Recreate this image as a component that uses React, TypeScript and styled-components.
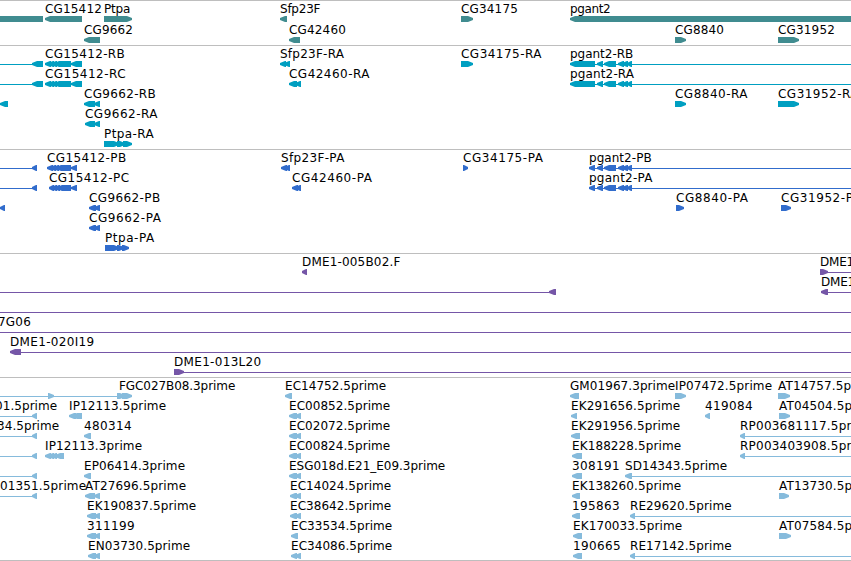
import React from 'react';
import styled, { createGlobalStyle } from 'styled-components';

const GlobalStyle = createGlobalStyle`
  body {
    margin: 0;
    background: #fff;
  }
`;

const Viewer = styled.div`
  display: flex;
  flex-flow: column;
  width: 851px;
  height: 561px;
  overflow: hidden;
  box-sizing: border-box;
  border-bottom: 1px solid #bebebe;
  color: #000;
  font: 12px/14px "DejaVu Sans", sans-serif;
`;

const TrackContainer = styled.div<{ $color: string }>`
  flex: none;
  border-top: 1px solid #bebebe;
  padding-bottom: 3px;
  color: ${props => props.$color};

  &:first-child {
    padding-bottom: 2px;
  }
`;

const RowContainer = styled.div<{ $height: number }>`
  position: relative;
  height: ${props => props.$height}px;
`;

const Label = styled.span<{ $x: number, $spacing: number }>`
  position: absolute;
  top: 1px;
  left: ${props => props.$x}px;
  color: #000;
  white-space: pre;
  letter-spacing: ${props => props.$spacing}px;
`;

const Glyphs = styled.svg`
  display: block;
  padding-top: 15px;
  width: 851px;
  height: 6px;
  fill: currentColor;
`;

type Span = [number, number];

interface Feature {
  name?: string,
  x?: number,
  dir?: 'left' | 'right' | 'none',
  line?: Span,
  exons?: Span[]
}

interface TrackData {
  id: string,
  color: string,
  rowHeight: number,
  rows: Feature[][]
}

const END = 860;

// left / right pointing feature, labelled at its first exon
const L = (name: string, exons: Span[], line?: Span): Feature => ({name, exons, line, dir: 'left'});
const R = (name: string, exons: Span[], line?: Span): Feature => ({name, exons, line, dir: 'right'});

const upstream: Feature = {dir: 'left', line: [0, 38], exons: [[32, 43]]};
const upstreamCds: Feature = {dir: 'left', line: [0, 33], exons: [[32, 37]]};
const pgantTail: Span[] = [[597, 603], [604, 616], [618, 624], [622, 628], [627, 632]];

const tracks: TrackData[] = [
  {
    id: 'gene', color: '#408c90', rowHeight: 21,
    rows: [
      [
        {dir: 'none', exons: [[0, 43]]},
        L('CG15412', [[45, 82]]),
        R('Ptpa', [[104, 132]]),
        L('Sfp23F', [[280, 287]]),
        R('CG34175', [[461, 473]]),
        L('pgant2', [[570, END]])
      ],
      [
        L('CG9662', [[84, 100]]),
        L('CG42460', [[289, 300]]),
        R('CG8840', [[675, 686]]),
        R('CG31952', [[778, 799]])
      ]
    ]
  },
  {
    id: 'transcript', color: '#009fc1', rowHeight: 20,
    rows: [
      [
        upstream,
        L('CG15412-RB', [[45, 51], [48, 54], [51, 57], [54, 71], [71, 82]]),
        L('Sfp23F-RA', [[280, 286], [284, 290]]),
        R('CG34175-RA', [[461, 473]]),
        L('pgant2-RB', [[570, 595], ...pgantTail], [595, END])
      ],
      [
        upstream,
        L('CG15412-RC', [[45, 51], [48, 54], [51, 57], [54, 71], [71, 82]]),
        L('CG42460-RA', [[289, 297], [295, 301]]),
        L('pgant2-RA', [[570, 595], ...pgantTail], [595, END])
      ],
      [
        {dir: 'left', exons: [[0, 8]]},
        L('CG9662-RB', [[84, 95], [94, 100]]),
        R('CG8840-RA', [[675, 686]]),
        R('CG31952-RA', [[778, 799]])
      ],
      [L('CG9662-RA', [[85, 95], [94, 100]])],
      [R('Ptpa-RA', [[104, 111], [106, 119], [117, 125], [123, 132]])]
    ]
  },
  {
    id: 'cds', color: '#316ccc', rowHeight: 20,
    rows: [
      [
        upstreamCds,
        L('CG15412-PB', [[47, 53], [50, 56], [53, 59], [56, 71], [71, 77]]),
        L('Sfp23F-PA', [[281, 287], [284, 290]]),
        R('CG34175-PA', [[463, 468]]),
        L('pgant2-PB', [[589, 595], ...pgantTail], [595, END])
      ],
      [
        upstreamCds,
        L('CG15412-PC', [[49, 54], [51, 57], [54, 60], [57, 71], [71, 77]]),
        L('CG42460-PA', [[292, 298], [295, 301]]),
        L('pgant2-PA', [[589, 595], ...pgantTail], [595, END])
      ],
      [
        {dir: 'left', exons: [[0, 5]]},
        L('CG9662-PB', [[89, 96], [94, 100]]),
        R('CG8840-PA', [[676, 684]]),
        R('CG31952-PA', [[781, 791]])
      ],
      [L('CG9662-PA', [[89, 96], [94, 100]])],
      [R('Ptpa-PA', [[105, 119], [117, 124], [122, 129]])]
    ]
  },
  {
    id: 'bac', color: '#7556a7', rowHeight: 20,
    rows: [
      [
        L('DME1-005B02.F', [[302, 307]]),
        R('DME1', [[820, 828]], [828, END])
      ],
      [
        {dir: 'left', line: [0, 550], exons: [[549, 556]]},
        L('DME1', [[821, 828]], [828, END])
      ],
      [{line: [0, END]}],
      [{name: '7G06', x: -2, line: [0, END]}],
      [L('DME1-020I19', [[10, 21]], [21, END])],
      [R('DME1-013L20', [[174, 184]], [184, END])]
    ]
  },
  {
    id: 'est', color: '#86bbdc', rowHeight: 20,
    rows: [
      [
        {dir: 'right', line: [0, 118], exons: [[48, 54]]},
        {...R('FGC027B08.3prime', [[117, 125], [122, 132]]), x: 119},
        L('EC14752.5prime', [[285, 292]]),
        L('GM01967.3prime', [[570, 579]]),
        R('IP07472.5prime', [[675, 686]]),
        R('AT14757.5prime', [[778, 790]])
      ],
      [
        {name: '01.5prime', x: -5, ...upstreamCds},
        L('IP12113.5prime', [[69, 76], [72, 82]]),
        L('EC00852.5prime', [[289, 297], [295, 301]]),
        L('EK291656.5prime', [[571, 577]]),
        L('419084', [[705, 710]]),
        R('AT04504.5prime', [[779, 790]])
      ],
      [
        {name: '34.5prime', x: -3, ...upstreamCds},
        L('480314', [[84, 91]]),
        L('EC02072.5prime', [[289, 297], [295, 301]]),
        L('EK291956.5prime', [[571, 580]]),
        L('RP003681117.5prime', [[740, 745]], [745, END])
      ],
      [
        upstreamCds,
        L('IP12113.3prime', [[45, 51], [48, 54], [51, 57], [55, 64]]),
        L('EC00824.5prime', [[289, 297], [295, 301]]),
        L('EK188228.5prime', [[572, 582]]),
        L('RP003403908.5prime', [[740, 745]], [745, END])
      ],
      [
        upstreamCds,
        L('EP06414.3prime', [[84, 91]]),
        L('ESG018d.E21_E09.3prime', [[289, 297], [295, 301]]),
        L('308191', [[572, 582]]),
        L('SD14343.5prime', [[625, 632]], [632, END])
      ],
      [
        {name: '01351.5prime', x: 0, ...upstreamCds},
        L('AT27696.5prime', [[85, 95], [94, 100]]),
        L('EC14024.5prime', [[290, 297], [295, 301]]),
        L('EK138260.5prime', [[572, 580]]),
        R('AT13730.5prime', [[779, 789]])
      ],
      [
        L('EK190837.5prime', [[87, 96], [94, 100]]),
        L('EC38642.5prime', [[290, 297], [295, 301]]),
        L('195863', [[572, 580]]),
        L('RE29620.5prime', [[630, 635]], [635, END])
      ],
      [
        L('311199', [[87, 96], [94, 100]]),
        L('EC33534.5prime', [[291, 298]]),
        L('EK170033.5prime', [[573, 582]]),
        R('AT07584.5prime', [[779, 791]])
      ],
      [
        L('EN03730.5prime', [[88, 96], [94, 100]]),
        L('EC34086.5prime', [[291, 297], [295, 301]]),
        L('190665', [[573, 582]]),
        L('RE17142.5prime', [[630, 635]], [635, END])
      ]
    ]
  }
];

const ADVANCE: Record<string, number> = {
  G: 9, D: 9, M: 10, N: 9, E: 7, B: 7, F: 6, L: 6, S: 7, T: 7, P: 8, R: 8.5, I: 3,
  p: 7.2, g: 7, a: 7, n: 7, d: 7, e: 7, t: 4, f: 4, r: 5, i: 3, m: 12,
  '-': 7.5, '.': 4, '_': 6
};

const ctx = document.createElement('canvas').getContext('2d')!;

const labelSpacing = (text: string) => {
  ctx.font = '12px "DejaVu Sans"';
  const wanted = text.split('').reduce((sum, ch) => sum + (ADVANCE[ch] || 8), 0);
  return (wanted - ctx.measureText(text).width) / text.length;
};

const exonPoints = ([start, end]: Span, dir?: string) => {
  const head = Math.min(6, end - start);
  if (dir === 'left') {
    return `${start},2 ${start + head - 1},0 ${end},0 ${end},6 ${start + head - 1},6 ${start},4`;
  }
  if (dir === 'right') {
    return `${start},0 ${end - head + 1},0 ${end},2 ${end},4 ${end - head + 1},6 ${start},6`;
  }
  return `${start},0 ${end},0 ${end},6 ${start},6`;
};

const Row = (props: { features: Feature[], height: number }) => (
  <RowContainer $height={props.height}>
    <Glyphs>
      {props.features.map((f, i) => (
        <g key={i}>
          {f.line && <rect x={f.line[0]} y={3} width={f.line[1] - f.line[0]} height={1} />}
          {f.exons && f.exons.map((exon, j) => <polygon key={j} points={exonPoints(exon, f.dir)} />)}
        </g>
      ))}
    </Glyphs>
    {props.features.filter(f => f.name).map((f, i) => (
      <Label key={i} $x={f.x ?? f.exons![0][0]} $spacing={labelSpacing(f.name!)}>{f.name}</Label>
    ))}
  </RowContainer>
);

const App = () => {
  return (
    <Viewer>
      <GlobalStyle />
      {tracks.map(track => (
        <TrackContainer key={track.id} $color={track.color}>
          {track.rows.map((features, i) => (
            <Row key={i} features={features} height={track.rowHeight} />
          ))}
        </TrackContainer>
      ))}
    </Viewer>
  );
};

export default App;
